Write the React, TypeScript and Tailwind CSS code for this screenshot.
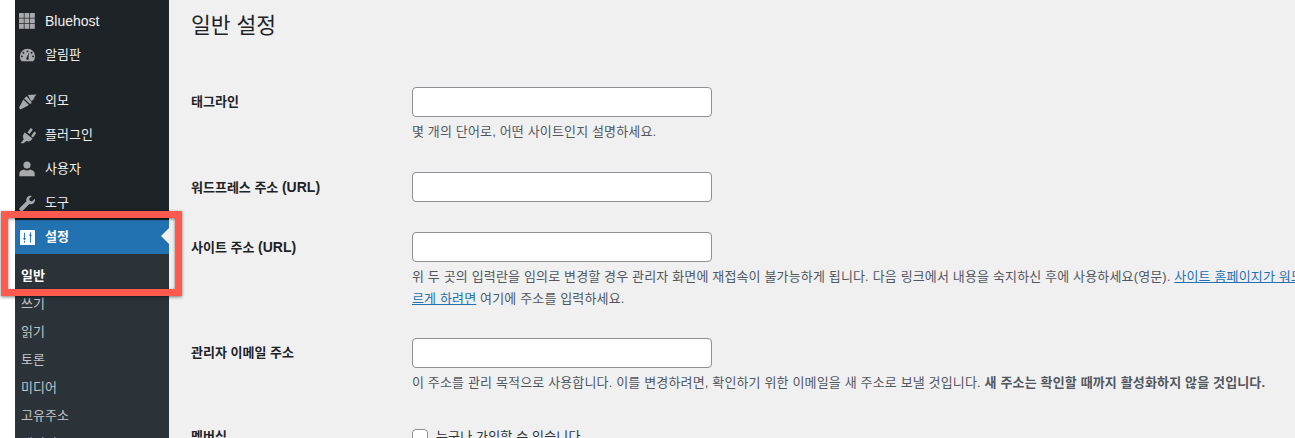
import type { ReactNode } from 'react';

const font = 'font-["Liberation_Sans","Noto_Sans_CJK_KR",sans-serif]';

function GridIcon() {
  return (
    <svg viewBox="0 0 16 16" className="w-4 h-4" fill="#a7aaad">
      {[0, 5.5, 11].map((y) =>
        [0, 5.5, 11].map((x) => <rect key={`${x}-${y}`} x={x} y={y} width="4.8" height="4.8" />)
      )}
    </svg>
  );
}

function GaugeIcon() {
  return (
    <svg viewBox="0 0 20 20" className="w-[17px] h-[17px]" fill="#a7aaad">
      <path
        fillRule="evenodd"
        d="M10 2a9 9 0 0 0-9 9c0 2.3.8 4.3 2.2 5.8h13.6A8.9 8.9 0 0 0 19 11a9 9 0 0 0-9-9zM10 4a1.1 1.1 0 1 1 0 2.2A1.1 1.1 0 0 1 10 4zM5.2 5.7a1.1 1.1 0 1 1 0 2.2 1.1 1.1 0 0 1 0-2.2zM14.8 5.7a1.1 1.1 0 1 1 0 2.2 1.1 1.1 0 0 1 0-2.2zM3.4 10a1.1 1.1 0 1 1 0 2.2 1.1 1.1 0 0 1 0-2.2zM16.6 10a1.1 1.1 0 1 1 0 2.2 1.1 1.1 0 0 1 0-2.2zM12 6.5l-.9 6.2a1.5 1.5 0 1 1-2.2 0z"
      />
    </svg>
  );
}

function BrushIcon() {
  return (
    <svg viewBox="0 0 20 20" className="w-[19px] h-[19px]" fill="#a7aaad">
      <path d="M10.5 3.2 19.5 2.5l-2.6 3.3.7 1-1.7.3.4 1.5-1.8.2-.6 1.3z" />
      <path d="M9.2 4.4l5.4 6.8-2 1.4-6.2-5.8z" />
      <path d="M5.6 8l5.8 5.4-1.6 1.3-7.3 3.6-1.4-1.6z" />
    </svg>
  );
}

function PlugIcon() {
  return (
    <svg viewBox="0 0 20 20" className="w-[17px] h-[17px]" fill="#a7aaad">
      <path d="M13.2 1.8 9.9 6.4l2.6 1.9 3.3-4.6c.9-1.2-1.6-3.1-2.6-1.9z" />
      <path d="M17.6 6 14.3 10.6l2.3 1.7L19.7 7.9c.9-1.3-1.2-3.1-2.1-1.9z" />
      <path d="M6.7 6.6 16 13.4l-1.2 1.6c-1.6 2-4 2.4-6 1.4L5.4 19H2l3.6-4.6C4.4 12.6 4.4 10 5.7 8z" />
    </svg>
  );
}

function UserIcon() {
  return (
    <svg viewBox="0 0 20 20" className="w-[18px] h-[18px]" fill="#a7aaad">
      <circle cx="10" cy="5.6" r="4" />
      <path d="M1.5 14.5c0-2.3 3-3.6 5.2-4 .9.8 2.1 1.2 3.3 1.2s2.4-.4 3.3-1.2c2.2.4 5.2 1.7 5.2 4V18h-17z" />
    </svg>
  );
}

function WrenchIcon() {
  return (
    <svg viewBox="0 0 20 20" className="w-[18px] h-[18px]" fill="#a7aaad">
      <path d="M18.6 5.2c.6 1.8.2 3.6-1.1 4.9-1.3 1.3-3.2 1.7-4.9 1.1L5.4 18.6a1.9 1.9 0 0 1-2.8 0l-.5-.5a1.9 1.9 0 0 1 0-2.8L9.4 8.1C8.8 6.4 9.2 4.5 10.5 3.2 11.8 1.9 13.7 1.5 15.4 2.1L12.3 5.2l.8 2.4 2.4.8z" />
    </svg>
  );
}

function SettingsIcon() {
  return (
    <svg viewBox="0 0 16 16" className="w-[15px] h-[15px]">
      <rect width="16" height="16" rx="0.5" fill="#ffffff" />
      <path d="M4.8 3v7M4.8 11.5v2M11.2 2.5v2M11.2 5.5v8" stroke="#2271b1" strokeWidth="1" />
      <path d="M3 8.6h3.6L4.8 11zM9.4 6.2h3.6L11.2 3.8z" fill="#2271b1" />
    </svg>
  );
}

function MenuItem({ icon, label, className = '' }: { icon: ReactNode; label: ReactNode; className?: string }) {
  return (
    <div className={`flex items-center h-[34px] text-[13px] text-[#f0f0f1] ${className}`}>
      <span className="w-[24px] mr-[6px] flex justify-center shrink-0">{icon}</span>
      <span>{label}</span>
    </div>
  );
}

function Field({ label, children, className = '' }: { label: ReactNode; children: ReactNode; className?: string }) {
  return (
    <div className={`flex ${className}`}>
      <div className="w-[221px] shrink-0 h-[30px] text-[13px] font-bold text-[#1d2327] leading-[30px]">{label}</div>
      <div className="w-[1036px] shrink-0">{children}</div>
    </div>
  );
}

function TextBox() {
  return <input type="text" className="block w-[300px] h-[30px] bg-white border border-[#8c8f94] rounded" />;
}

function Hint({ children }: { children: ReactNode }) {
  return <p className="mt-[4px] text-[13px] leading-[22px] tracking-[0.15px] text-[#50575e]">{children}</p>;
}

export default function App() {
  return (
    <div className={`relative flex w-[1295px] h-[438px] overflow-hidden bg-white ${font}`}>
      <div className="w-[15px] shrink-0 bg-white" />

      <aside className="w-[154px] shrink-0 bg-[#1d2327]">
        <div className="pt-1">
          <MenuItem icon={<GridIcon />} label={<span className="text-[14px]">Bluehost</span>} />
          <MenuItem icon={<GaugeIcon />} label="알림판" />
        </div>
        <div className="pt-3">
          <MenuItem icon={<BrushIcon />} label="외모" />
          <MenuItem icon={<PlugIcon />} label="플러그인" />
          <MenuItem icon={<UserIcon />} label="사용자" />
          <MenuItem icon={<WrenchIcon />} label="도구" />
        </div>
        <div className="relative flex items-center h-[34px] bg-[#2271b1] text-[13px] font-semibold text-white">
          <span className="w-[24px] mr-[6px] flex justify-center shrink-0">
            <SettingsIcon />
          </span>
          <span>설정</span>
          <span className="absolute right-0 top-[8px] border-y-[8px] border-r-[8px] border-y-transparent border-r-[#f0f0f1]" />
        </div>
        <div className="bg-[#2c3338] h-[200px] pt-[8px] pl-[6px] text-[13px] text-[#c3c4c7]">
          <div className="h-[28px] leading-[28px] font-semibold text-white">일반</div>
          <div className="h-[28px] leading-[28px]">쓰기</div>
          <div className="h-[28px] leading-[28px]">읽기</div>
          <div className="h-[28px] leading-[28px]">토론</div>
          <div className="h-[28px] leading-[28px]">미디어</div>
          <div className="h-[28px] leading-[28px]">고유주소</div>
          <div className="h-[28px] leading-[28px]">개인정보</div>
        </div>
      </aside>

      <main className="flex-1 min-w-0 bg-[#f0f0f1] pl-[22px]">
        <h1 className="mt-[9px] text-[21.5px] leading-[34px] text-[#1d2327]">일반 설정</h1>

        <Field label="태그라인" className="mt-[44px]">
          <TextBox />
          <Hint>몇 개의 단어로, 어떤 사이트인지 설명하세요.</Hint>
        </Field>

        <Field label={<>워드프레스 주소 <span className="text-[14px]">(URL)</span></>} className="mt-[29px]">
          <TextBox />
        </Field>

        <Field label={<>사이트 주소 <span className="text-[14px]">(URL)</span></>} className="mt-[30px]">
          <TextBox />
          <Hint>
            위 두 곳의 입력란을 임의로 변경할 경우 관리자 화면에 재접속이 불가능하게 됩니다. 다음 링크에서 내용을 숙지하신 후에 사용하세요(영문).{' '}
            <a className="text-[#2271b1] underline">사이트 홈페이지가 워드프레스 설치 디렉터리와 다르게 하려면</a> 여기에 주소를 입력하세요.
          </Hint>
        </Field>

        <Field label="관리자 이메일 주소" className="mt-[28px]">
          <TextBox />
          <Hint>
            이 주소를 관리 목적으로 사용합니다. 이를 변경하려면, 확인하기 위한 이메일을 새 주소로 보낼 것입니다.{' '}
            <strong className="font-semibold">새 주소는 확인할 때까지 활성화하지 않을 것입니다.</strong>
          </Hint>
        </Field>

        <Field label="멤버십" className="mt-[28px]">
          <label className="flex items-center gap-2 h-[30px] text-[13px] tracking-[0.15px] text-[#2c3338]">
            <input type="checkbox" className="appearance-none w-4 h-4 bg-white border border-[#8c8f94] rounded" />
            누구나 가입할 수 있습니다
          </label>
        </Field>
      </main>

      <div className="absolute left-[1px] top-[211px] w-[181px] h-[85px] border-[7px] border-[#ff5a4d] shadow-[0_1px_3px_rgba(0,0,0,0.5),inset_0_1px_3px_rgba(0,0,0,0.5)]" />
    </div>
  );
}
